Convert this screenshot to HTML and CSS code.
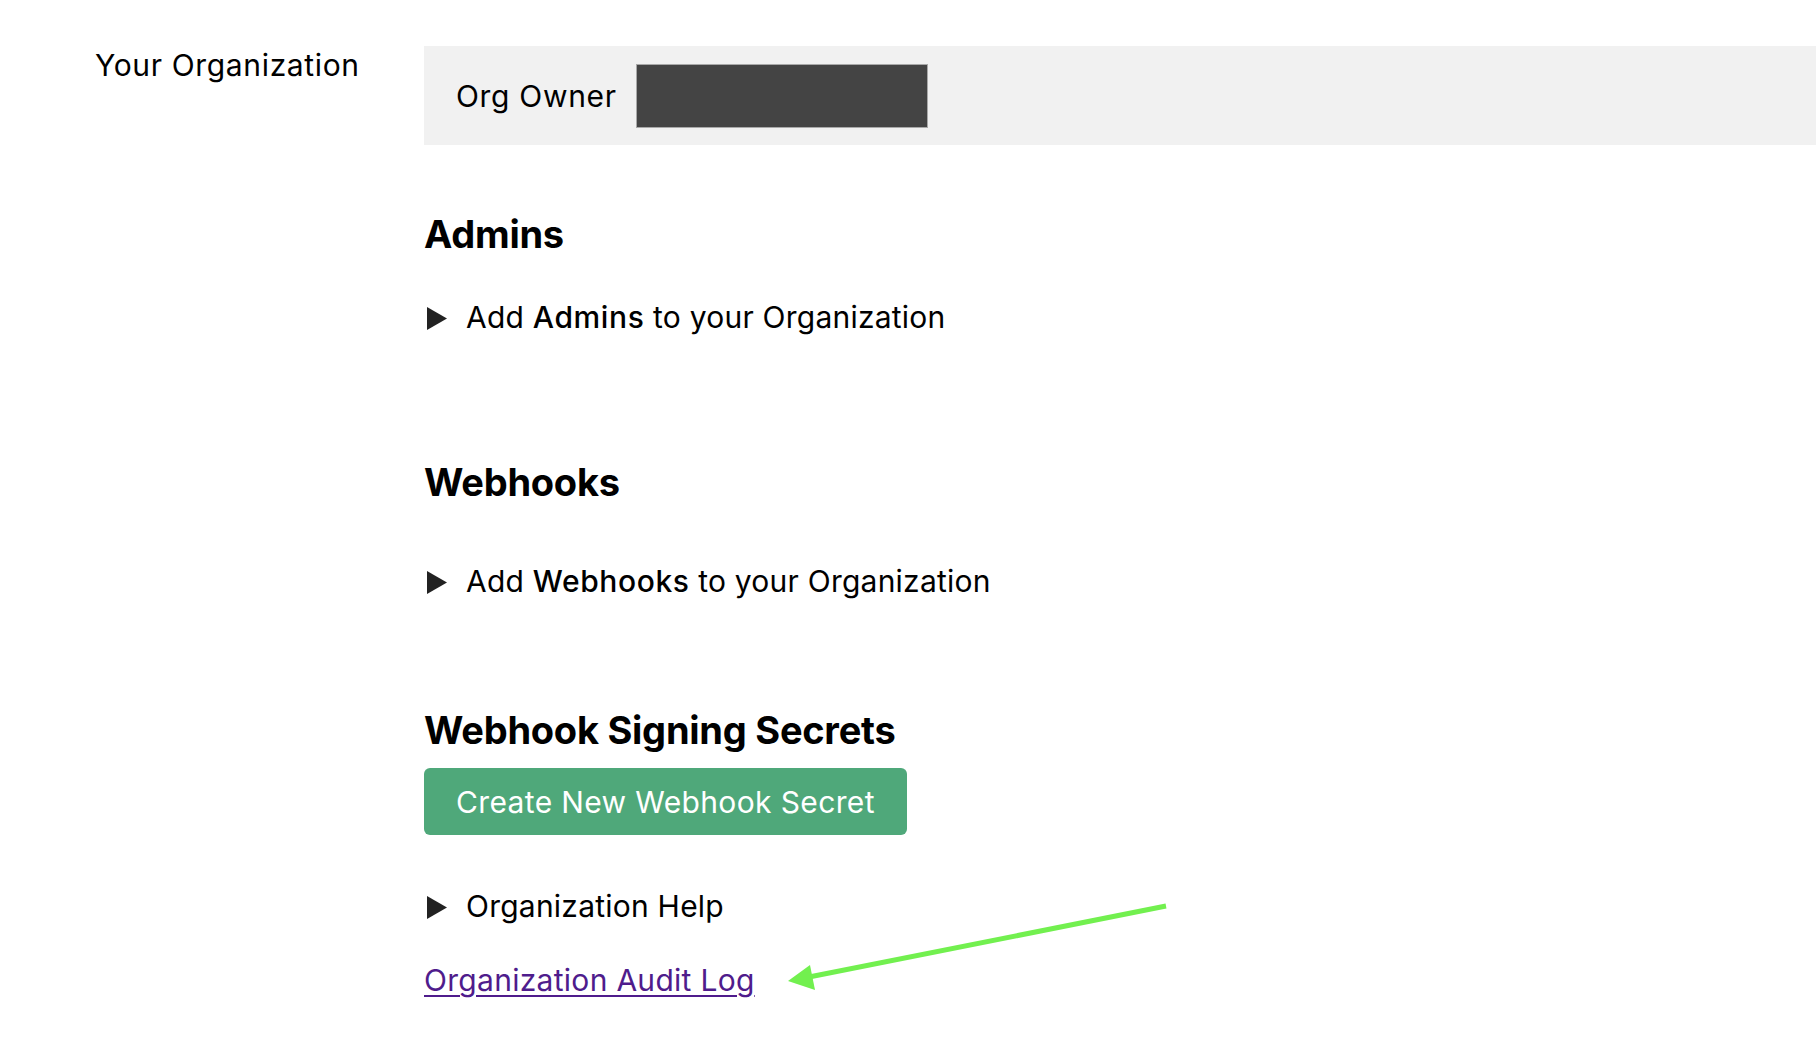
FILE: index.html
```html
<!DOCTYPE html>
<html lang="en">
<head>
<meta charset="utf-8">
<title>Your Organization</title>
<link rel="stylesheet" href="styles.css">
</head>
<body>
<div class="page">
  <aside class="sidebar">
    <div class="side-label">Your Organization</div>
  </aside>
  <main class="main">
    <div class="owner-band">
      <span class="owner-label">Org Owner</span>
      <span class="owner-value"></span>
    </div>

    <section class="section section-admins">
      <h2 class="heading">Admins</h2>
      <details class="disclosure disclosure-admins">
        <summary class="summary"><span class="tri"><svg width="20" height="23" viewBox="0 0 20 23"><path d="M0 0 L20 11.5 L0 23 Z" fill="#222"/></svg></span><span>Add <strong class="strong">Admins</strong> to your Organization</span></summary>
      </details>
    </section>

    <section class="section section-webhooks">
      <h2 class="heading">Webhooks</h2>
      <details class="disclosure disclosure-webhooks">
        <summary class="summary"><span class="tri"><svg width="20" height="23" viewBox="0 0 20 23"><path d="M0 0 L20 11.5 L0 23 Z" fill="#222"/></svg></span><span>Add <strong class="strong">Webhooks</strong> to your Organization</span></summary>
      </details>
    </section>

    <section class="section section-secrets">
      <h2 class="heading">Webhook Signing Secrets</h2>
      <button class="btn" type="button">Create New Webhook Secret</button>
      <details class="disclosure disclosure-help">
        <summary class="summary"><span class="tri"><svg width="20" height="23" viewBox="0 0 20 23"><path d="M0 0 L20 11.5 L0 23 Z" fill="#222"/></svg></span><span>Organization Help</span></summary>
      </details>
      <a class="audit-link" href="#audit">Organization Audit Log</a>
    </section>
  </main>
</div>
<svg class="annot-arrow" width="1816" height="1044" viewBox="0 0 1816 1044">
  <line x1="1166" y1="906" x2="804" y2="978" stroke="#72f04f" stroke-width="5" stroke-linecap="butt"/>
  <path d="M788 981 L810 965 L815 990 Z" fill="#72f04f"/>
</svg>
</body>
</html>
```
FILE: styles.css
```css
html, body {
  margin: 0;
  padding: 0;
  background: #fff;
}
body {
  font-family: Inter, "Noto Sans", "Liberation Sans", sans-serif;
  color: #000;
  font-size: 30px;
  line-height: 38px;
  position: relative;
  min-height: 1044px;
  overflow: hidden;
}
.page {
  display: flex;
  padding-top: 46px;
}
.sidebar {
  width: 424px;
  flex: none;
  box-sizing: border-box;
  padding-left: 95px;
}
.side-label {
  line-height: 38px;
  letter-spacing: 0.65px;
}
.main {
  flex: 1;
  min-width: 0;
}
.owner-band {
  background: #f1f1f1;
  display: flex;
  align-items: center;
  gap: 19px;
  padding: 18px 0 17px 32px;
}
.owner-label {
  letter-spacing: 0.68px;
}
.owner-value {
  display: block;
  width: 290px;
  height: 62px;
  background: #444;
  border: 1px solid #a9a9a9;
}
.heading {
  margin: 0;
  font-size: 38px;
  line-height: 44px;
  font-weight: 700;
  letter-spacing: -0.25px;
}
.section-admins {
  margin-top: 67px;
}
.section-webhooks {
  margin-top: 124px;
}
.section-secrets {
  margin-top: 108px;
}
.disclosure {
  margin: 0;
}
.disclosure-admins {
  margin-top: 42px;
}
.disclosure-webhooks {
  margin-top: 58px;
}
.disclosure-help {
  margin-top: 52px;
}
.summary {
  list-style: none;
  display: flex;
  align-items: center;
  gap: 19px;
  padding-left: 3px;
  letter-spacing: 0.23px;
  cursor: pointer;
}
.summary::-webkit-details-marker {
  display: none;
}
.tri {
  display: flex;
  width: 20px;
  height: 23px;
  margin-top: 3px;
}
.strong {
  font-weight: 500;
  letter-spacing: 0.6px;
}
.btn {
  display: block;
  margin-top: 16px;
  height: 67px;
  padding: 0 32px;
  border: none;
  border-radius: 6px;
  background: #4fa87a;
  color: #fff;
  font-family: inherit;
  font-size: 30px;
  line-height: 38px;
  letter-spacing: 0.36px;
}
.audit-link {
  display: inline-block;
  margin-top: 36px;
  color: #4f1c8c;
  letter-spacing: 0.29px;
  text-decoration: underline;
  text-decoration-thickness: 2px;
  text-underline-offset: 4px;
}
.annot-arrow {
  position: absolute;
  left: 0;
  top: 0;
  pointer-events: none;
}
```
